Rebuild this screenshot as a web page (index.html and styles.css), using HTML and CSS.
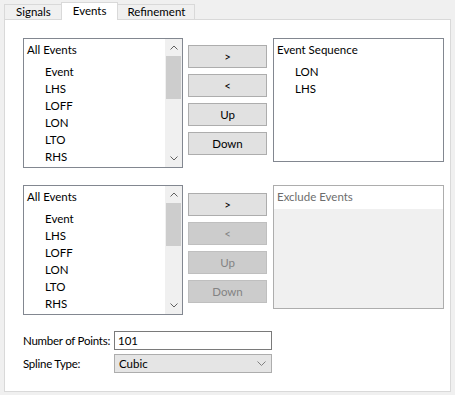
FILE: index.html
```html
<!DOCTYPE html>
<html lang="en">
<head>
  <meta charset="UTF-8" />
  <title>Events</title>
  <link rel="stylesheet" href="styles.css">
</head>
<body>
  <div class="tabs">
    <div class="tab">Signals</div>
    <div class="tab active">Events</div>
    <div class="tab">Refinement</div>
  </div>

  <div class="panel">
    <div class="group">
      <div class="listbox">
        <div class="list-body">
          <div class="list-head">All Events</div>
          <div class="item">Event</div>
          <div class="item">LHS</div>
          <div class="item">LOFF</div>
          <div class="item">LON</div>
          <div class="item">LTO</div>
          <div class="item">RHS</div>
        </div>
        <div class="scrollbar">
          <div class="arrow">
            <svg width="8" height="5" viewBox="0 0 8 5"><path d="M0.5 4.5 L4 1 L7.5 4.5" fill="none" stroke="#606060" stroke-width="1"/></svg>
          </div>
          <div class="track"><div class="thumb"></div></div>
          <div class="arrow">
            <svg width="8" height="5" viewBox="0 0 8 5"><path d="M0.5 0.5 L4 4 L7.5 0.5" fill="none" stroke="#606060" stroke-width="1"/></svg>
          </div>
        </div>
      </div>

      <div class="buttons">
        <button>&gt;</button>
        <button>&lt;</button>
        <button>Up</button>
        <button>Down</button>
      </div>

      <div class="box">
        <div class="list-head">Event Sequence</div>
        <div class="item">LON</div>
        <div class="item">LHS</div>
      </div>
    </div>

    <div class="group second">
      <div class="listbox">
        <div class="list-body">
          <div class="list-head">All Events</div>
          <div class="item">Event</div>
          <div class="item">LHS</div>
          <div class="item">LOFF</div>
          <div class="item">LON</div>
          <div class="item">LTO</div>
          <div class="item">RHS</div>
        </div>
        <div class="scrollbar">
          <div class="arrow">
            <svg width="8" height="5" viewBox="0 0 8 5"><path d="M0.5 4.5 L4 1 L7.5 4.5" fill="none" stroke="#606060" stroke-width="1"/></svg>
          </div>
          <div class="track"><div class="thumb"></div></div>
          <div class="arrow">
            <svg width="8" height="5" viewBox="0 0 8 5"><path d="M0.5 0.5 L4 4 L7.5 0.5" fill="none" stroke="#606060" stroke-width="1"/></svg>
          </div>
        </div>
      </div>

      <div class="buttons second-buttons">
        <button>&gt;</button>
        <button disabled>&lt;</button>
        <button disabled>Up</button>
        <button disabled>Down</button>
      </div>

      <div class="box disabled-box">
        <div class="list-head">Exclude Events</div>
        <div class="box-fill"></div>
      </div>
    </div>

    <div class="fields">
      <div class="field">
        <label for="points">Number of Points:</label>
        <input type="text" id="points" value="101" />
      </div>
      <div class="field">
        <label>Spline Type:</label>
        <div class="select">
          <span>Cubic</span>
          <svg width="9" height="5" viewBox="0 0 9 5"><path d="M0.5 0.5 L4.5 4.5 L8.5 0.5" fill="none" stroke="#808080" stroke-width="1"/></svg>
        </div>
      </div>
    </div>
  </div>
</body>
</html>
```

FILE: styles.css
```css
body {
  margin: 0;
  background: #f0f0f0;
  font-family: Lato, "Noto Sans", sans-serif;
  font-size: 11.5px;
  color: #000;
  width: 455px;
  height: 395px;
  overflow: hidden;
}
.tabs {
  display: flex;
  align-items: flex-end;
  height: 19px;
  padding-left: 4px;
}
.tab {
  height: 14px;
  line-height: 14px;
  padding: 0 9px;
  background: #f0f0f0;
  border: 1px solid #d9d9d9;
  border-bottom: none;
  margin-right: -1px;
}
.tab:first-child {
  padding: 0 10px 0 11px;
}
.tab.active {
  height: 17px;
  line-height: 15px;
  padding: 0 11px;
  background: #fff;
  position: relative;
  z-index: 1;
  margin-bottom: -1px;
}
.panel {
  margin-left: 4px;
  width: 447px;
  height: 373px;
  background: #fff;
  border: 1px solid #d9d9d9;
  padding: 18px 0 0 18px;
  box-sizing: border-box;
}
.group {
  display: flex;
  align-items: flex-start;
  height: 130px;
}
.group.second {
  margin-top: 17px;
}
.listbox {
  width: 160px;
  height: 130px;
  border: 1px solid #828790;
  box-sizing: border-box;
  display: flex;
  overflow: hidden;
}
.list-body {
  flex: 1;
  padding: 2px 0 0 3px;
  overflow: hidden;
}
.list-head {
  height: 17px;
  line-height: 17px;
  margin-bottom: 5px;
}
.item {
  height: 17px;
  line-height: 17px;
  padding-left: 18px;
}
.scrollbar {
  width: 17px;
  display: flex;
  flex-direction: column;
  background: #f0f0f0;
}
.arrow {
  height: 17px;
  display: flex;
  align-items: center;
  justify-content: center;
}
.track {
  flex: 1;
}
.thumb {
  margin: 0 1px;
  height: 43px;
  background: #cdcdcd;
}
.buttons {
  display: flex;
  flex-direction: column;
  gap: 6px;
  margin: 7px 0 0 5px;
}
.second-buttons {
  margin-top: 8px;
}
button {
  width: 79px;
  height: 23px;
  background: #e1e1e1;
  border: 1px solid #adadad;
  font-family: inherit;
  font-size: 11.5px;
  color: #000;
  padding: 0;
}
button:disabled {
  background: #cccccc;
  border-color: #bfbfbf;
  color: #838383;
}
.box {
  width: 171px;
  height: 124px;
  margin-left: 6px;
  border: 1px solid #828790;
  box-sizing: border-box;
  padding: 2px 0 0 3px;
}
.disabled-box {
  border-color: #adadad;
  color: #6d6d6d;
  display: flex;
  flex-direction: column;
}
.disabled-box .list-head {
  margin-bottom: 0;
  height: 21px;
  line-height: 17px;
}
.box-fill {
  flex: 1;
  background: #f0f0f0;
  margin: 0 0 0 -3px;
}
.fields {
  margin-top: 16px;
  display: flex;
  flex-direction: column;
  gap: 4px;
}
.field {
  display: flex;
  align-items: center;
  height: 19px;
}
label {
  flex: none;
  width: 91px;
  white-space: nowrap;
  letter-spacing: -0.25px;
}
input[type="text"] {
  width: 158px;
  height: 19px;
  box-sizing: border-box;
  border: 1px solid #7a7a7a;
  font-family: inherit;
  font-size: 11.5px;
  padding: 0 3px;
  outline: none;
}
.select {
  width: 158px;
  height: 19px;
  box-sizing: border-box;
  border: 1px solid #adadad;
  background: #e5e5e5;
  display: flex;
  align-items: center;
  justify-content: space-between;
  padding: 0 5px 0 4px;
}
```
